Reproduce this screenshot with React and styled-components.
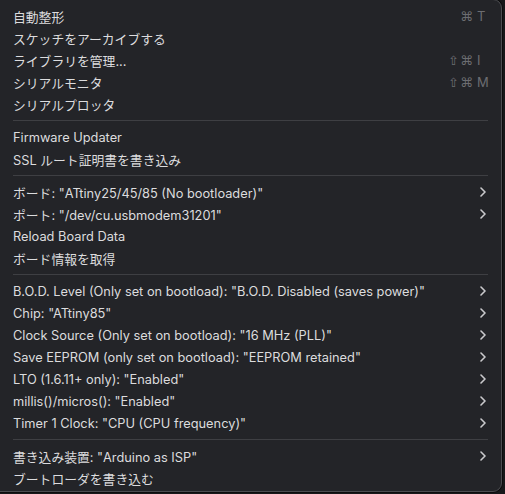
import React from "react";
import styled, { createGlobalStyle } from "styled-components";

const GlobalStyle = createGlobalStyle`
  html, body {
    margin: 0;
    padding: 0;
    background: #17181a;
  }
  body {
    font-family: Inter, "Noto Sans CJK JP", "Noto Sans", sans-serif;
    -webkit-font-smoothing: antialiased;
  }
`;

const sections = [
  [
    { label: "自動整形", keys: ["⌘", "T"] },
    { label: "スケッチをアーカイブする" },
    { label: "ライブラリを管理...", keys: ["⇧⌘", "I"] },
    { label: "シリアルモニタ", keys: ["⇧⌘", "M"] },
    { label: "シリアルプロッタ" },
  ],
  [{ label: "Firmware Updater" }, { label: "SSL ルート証明書を書き込み" }],
  [
    { label: 'ボード: "ATtiny25/45/85 (No bootloader)"', sub: true },
    { label: 'ポート: "/dev/cu.usbmodem31201"', sub: true },
    { label: "Reload Board Data" },
    { label: "ボード情報を取得" },
  ],
  [
    { label: 'B.O.D. Level (Only set on bootload): "B.O.D. Disabled (saves power)"', sub: true },
    { label: 'Chip: "ATtiny85"', sub: true },
    { label: 'Clock Source (Only set on bootload): "16 MHz (PLL)"', sub: true },
    { label: 'Save EEPROM (only set on bootload): "EEPROM retained"', sub: true },
    { label: 'LTO (1.6.11+ only): "Enabled"', sub: true },
    { label: 'millis()/micros(): "Enabled"', sub: true },
    { label: 'Timer 1 Clock: "CPU (CPU frequency)"', sub: true },
  ],
  [
    { label: '書き込み装置: "Arduino as ISP"', sub: true },
    { label: "ブートローダを書き込む" },
  ],
];

const App = () => (
  <>
    <GlobalStyle />
    <Frame>
      <Menu>
        {sections.map((items, s) => (
          <React.Fragment key={s}>
            {s > 0 && <Separator />}
            {items.map((item) => (
              <Row key={item.label}>
                <Label>{item.label}</Label>
                {item.keys && (
                  <Shortcut>
                    <Mods>{item.keys[0]}</Mods>
                    <Key>{item.keys[1]}</Key>
                  </Shortcut>
                )}
                {item.sub && (
                  <Chevron width="6" height="10" viewBox="0 0 6 10">
                    <polyline points="1,1 5,5 1,9" />
                  </Chevron>
                )}
              </Row>
            ))}
          </React.Fragment>
        ))}
      </Menu>
    </Frame>
  </>
);

const Frame = styled.div`
  width: 505px;
  height: 494px;
  overflow: hidden;
`;

const Menu = styled.div`
  box-sizing: border-box;
  width: 512px;
  margin: -1px 0 0 -10px;
  padding: 5px 0 2px;
  background: #232428;
  border: 1px solid #4b4c50;
  border-radius: 9px;
  box-shadow: 0 0 0 1px #0c0c0d;
`;

const Row = styled.div`
  display: flex;
  align-items: center;
  height: 22px;
  padding: 0 14px 0 22px;
  color: #dcdcde;
  font-size: 12.8px;
`;

const Label = styled.span`
  flex: 1;
  white-space: nowrap;
`;

const Shortcut = styled.span`
  display: flex;
  align-items: center;
  color: #6c6d71;
  font-size: 13px;
  margin-right: -2px;
`;

const Mods = styled.span`
  font-family: "DejaVu Sans", sans-serif;
  font-size: 13px;
  letter-spacing: 1px;
`;

const Key = styled.span`
  width: 12px;
  margin-left: 3px;
`;

const Chevron = styled.svg`
  fill: none;
  stroke: #cacacd;
  stroke-width: 1.6;
  stroke-linecap: round;
  stroke-linejoin: round;
  margin-right: 1px;
`;

const Separator = styled.div`
  height: 1px;
  margin: 5px 13px 5px 22px;
  background: #3e3f43;
`;

export default App;
